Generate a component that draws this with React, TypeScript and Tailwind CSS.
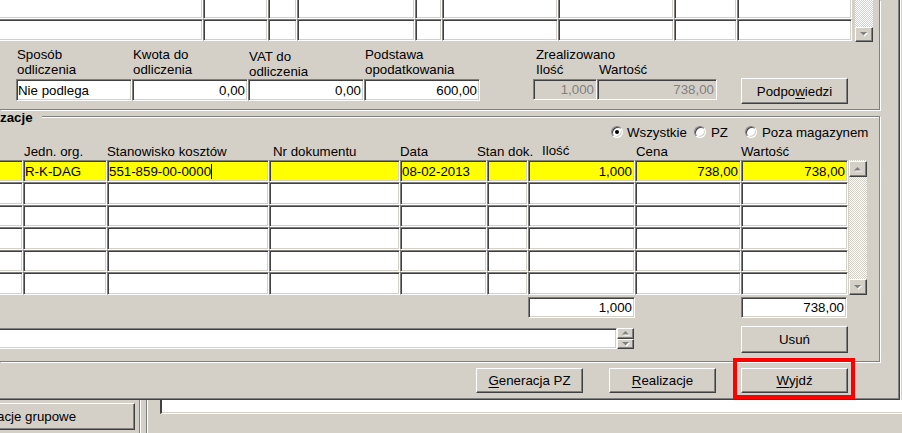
import React from 'react';

const SUNKEN =
  'border border-t-[#808080] border-l-[#808080] border-b-white border-r-white shadow-[inset_1px_1px_0_#404040,inset_-1px_-1px_0_#d4d0c8]';
const SUNKEN_OPEN =
  'border border-l-0 border-t-[#808080] border-b-white border-r-white shadow-[inset_0_1px_0_#404040,inset_-1px_-1px_0_#d4d0c8]';
const RAISED =
  'border border-t-white border-l-white border-b-[#404040] border-r-[#404040] shadow-[inset_-1px_-1px_0_#808080]';
const RAISED_OPEN =
  'border border-l-0 border-t-white border-b-[#404040] border-r-[#404040] shadow-[inset_-1px_-1px_0_#808080]';
const TRACK =
  'bg-[repeating-conic-gradient(#d4d0c8_0%_25%,#ffffff_0%_50%)] bg-[length:2px_2px]';

const topCols = [
  'w-[203px]',
  'w-[65px]',
  'w-[29px]',
  'w-[118px]',
  'w-[27px]',
  'w-[116px]',
  'w-[116px]',
  'w-[63px]',
  'w-[115px]'
];

const lowCols = [
  'w-[23px]',
  'w-[84px]',
  'w-[162px]',
  'w-[131px]',
  'w-[87px]',
  'w-[41px]',
  'w-[107px]',
  'w-[106px]',
  'w-[107px]'
];

const rowHeights = ['h-[22px]', 'h-[23px]', 'h-[22px]', 'h-[23px]', 'h-[22px]', 'h-[23px]'];

// first row of the realizations grid (yellow, being edited)
const firstRow: { text: string; right?: boolean; caret?: boolean }[] = [
  { text: '' },
  { text: 'R-K-DAG' },
  { text: '551-859-00-0000', caret: true },
  { text: '' },
  { text: '08-02-2013' },
  { text: '' },
  { text: '1,000', right: true },
  { text: '738,00', right: true },
  { text: '738,00', right: true }
];

const Arrow = ({ down }: { down?: boolean }) => (
  <svg width="8" height="5" viewBox="0 0 8 5">
    {down ? (
      <>
        <path d="M1 1h7L4.5 4.5z" fill="#ffffff" />
        <path d="M0 0h7L3.5 3.5z" fill="#808080" />
      </>
    ) : (
      <>
        <path d="M4.5 1L8 4.5H1z" fill="#ffffff" />
        <path d="M3.5 0L7 3.5H0z" fill="#808080" />
      </>
    )}
  </svg>
);

const ScrollBtn = ({ down, className }: { down?: boolean; className: string }) => (
  <div className={`${RAISED} ${className} w-full bg-[#d4d0c8] flex items-center justify-center`}>
    <Arrow down={down} />
  </div>
);

const Radio = ({ on }: { on?: boolean }) => (
  <span className="w-[12px] h-[12px] shrink-0 rounded-full bg-white border border-t-[#808080] border-l-[#808080] border-b-white border-r-white shadow-[inset_1px_1px_0_#404040,inset_-1px_-1px_0_#d4d0c8] flex items-center justify-center">
    {on && <span className="w-[4px] h-[4px] rounded-full bg-black" />}
  </span>
);

const Button = ({ className, children }: { className: string; children: React.ReactNode }) => (
  <div className={`${RAISED} ${className} bg-[#d4d0c8] flex items-center justify-center`}>{children}</div>
);

interface FieldProps {
  line1: string;
  line2: string;
  value: string;
  right?: boolean;
  lower?: boolean;
}

const Field: React.FC<FieldProps> = ({ line1, line2, value, right, lower }) => (
  <div className="w-[116px] flex flex-col">
    <div className={`h-[32px] pl-[1px] whitespace-nowrap ${lower ? 'pt-[2px]' : ''}`}>
      <div>{line1}</div>
      <div>{line2}</div>
    </div>
    <div
      className={`h-[22px] bg-white ${SUNKEN} flex items-center ${right ? 'justify-end pr-[2px]' : 'pl-[1px]'}`}
    >
      {value}
    </div>
  </div>
);

const UpperGroup = () => (
  <div className="w-[880px] h-[110px] shrink-0 border-r border-b border-[#808080] shadow-[1px_1px_0_#ffffff] flex flex-col">
    <div className="flex items-start -mt-[3px]">
      <div className="flex flex-col">
        {[0, 1].map((r) => (
          <div key={r} className="flex h-[22px]">
            {topCols.map((w, i) => (
              <div key={i} className={`${w} h-full bg-white ${i === 0 ? SUNKEN_OPEN : SUNKEN}`} />
            ))}
          </div>
        ))}
      </div>
      <div className={`ml-[3px] w-[18px] h-[45px] flex flex-col justify-end ${TRACK}`}>
        <ScrollBtn down className="h-[15px]" />
      </div>
    </div>

    <div className="flex items-start mt-[5px] ml-[16px]">
      <Field line1="Sposób" line2="odliczenia" value="Nie podlega" />
      <Field line1="Kwota do" line2="odliczenia" value="0,00" right />
      <Field line1="VAT do" line2="odliczenia" value="0,00" right lower />
      <Field line1="Podstawa" line2="opodatkowania" value="600,00" right />

      <div className="ml-[53px] flex flex-col">
        <div className="pl-[3px]">Zrealizowano</div>
        <div className="flex h-[17px]">
          <div className="w-[64px] pl-[3px]">Ilość</div>
          <div className="pl-[2px]">Wartość</div>
        </div>
        <div className="flex">
          <div className={`w-[64px] h-[21px] ${SUNKEN} flex items-center justify-end pr-[2px] text-[#808080]`}>
            1,000
          </div>
          <div className={`w-[120px] h-[21px] ${SUNKEN} flex items-center justify-end pr-[2px] text-[#808080]`}>
            738,00
          </div>
        </div>
      </div>

      <Button className="ml-[24px] mt-[31px] w-[107px] h-[26px]">
        <span>
          Podpo<span className="underline underline-offset-[2px]">w</span>iedzi
        </span>
      </Button>
    </div>
  </div>
);

const LowerGroup = () => (
  <div className="mt-[6px] w-[880px] h-[246px] shrink-0 border-t border-r border-b border-[#808080] shadow-[inset_0_1px_0_#ffffff,1px_1px_0_#ffffff] flex flex-col">
    <div className="-mt-[6px] h-[13px] leading-[13px] w-fit pr-[9px] bg-[#d4d0c8] font-bold">zacje</div>

    {/* filter radios */}
    <div className="h-[16px] flex items-center ml-[611px]">
      <div className="w-[83px] flex items-center gap-[4px]">
        <Radio on />
        <span>Wszystkie</span>
      </div>
      <div className="w-[51px] flex items-center gap-[5px]">
        <Radio />
        <span>PZ</span>
      </div>
      <div className="flex items-center gap-[5px]">
        <Radio />
        <span className="whitespace-nowrap">Poza magazynem</span>
      </div>
    </div>

    {/* column headers */}
    <div className="h-[20px] pt-[4px] flex ml-[24px] whitespace-nowrap">
      <div className="w-[83px]">Jedn. org.</div>
      <div className="w-[166px]">Stanowisko kosztów</div>
      <div className="w-[127px]">Nr dokumentu</div>
      <div className="w-[77px]">Data</div>
      <div className="w-[65px]">Stan dok.</div>
      <div className="w-[94px] -mt-[1px]">Ilość</div>
      <div className="w-[105px]">Cena</div>
      <div>Wartość</div>
    </div>

    {/* grid */}
    <div className="flex items-start">
      <div className="flex flex-col">
        {rowHeights.map((h, r) => (
          <div key={r} className={`flex ${h}`}>
            {lowCols.map((w, i) => {
              const cell = firstRow[i];
              const yellow = r === 0;
              return (
                <div
                  key={i}
                  className={`${w} h-full ${yellow ? 'bg-[#ffff00]' : 'bg-white'} ${
                    i === 0 ? SUNKEN_OPEN : SUNKEN
                  } flex items-center whitespace-nowrap overflow-hidden ${
                    cell.right ? 'justify-end pr-[2px]' : 'pl-[1px]'
                  }`}
                >
                  {yellow && cell.text}
                  {yellow && cell.caret && <span className="w-[1px] h-[15px] bg-black" />}
                </div>
              );
            })}
          </div>
        ))}
      </div>
      <div className={`ml-[1px] w-[18px] h-[135px] flex flex-col justify-between ${TRACK}`}>
        <ScrollBtn className="h-[16px] mt-[1px]" />
        <ScrollBtn down className="h-[16px]" />
      </div>
    </div>

    {/* totals */}
    <div className="flex mt-[2px] ml-[528px]">
      <div className={`w-[107px] h-[21px] bg-white ${SUNKEN} flex items-center justify-end pr-[2px]`}>1,000</div>
      <div className={`ml-[106px] w-[106px] h-[21px] bg-white ${SUNKEN} flex items-center justify-end pr-[2px]`}>
        738,00
      </div>
    </div>

    {/* note field + delete */}
    <div className="flex items-start mt-[8px]">
      <div className={`mt-[2px] w-[617px] h-[21px] bg-white ${SUNKEN_OPEN}`} />
      <div className="mt-[2px] w-[17px] h-[21px] flex flex-col">
        <ScrollBtn className="h-[11px]" />
        <ScrollBtn down className="h-[10px]" />
      </div>
      <Button className="ml-[107px] w-[107px] h-[27px]">Usuń</Button>
    </div>
  </div>
);

const Window = () => (
  <div className="w-[900px] h-[400px] shrink-0 border-r border-b border-[#404040] shadow-[inset_-1px_-1px_0_#808080] flex flex-col">
    <UpperGroup />
    <LowerGroup />
    <div className="flex mt-[6px] ml-[476px]">
      <Button className="w-[107px] h-[25px]">
        <span>
          <span className="underline underline-offset-[2px]">G</span>eneracja PZ
        </span>
      </Button>
      <Button className="ml-[26px] w-[107px] h-[25px]">
        <span>
          <span className="underline underline-offset-[2px]">R</span>ealizacje
        </span>
      </Button>
      <div className="relative ml-[25px]">
        <Button className="w-[107px] h-[25px]">
          <span>
            <span className="underline underline-offset-[2px]">W</span>yjdź
          </span>
        </Button>
        {/* red highlight annotation */}
        <div className="absolute -left-[8px] -top-[10px] w-[122px] h-[41px] border-4 border-[#ff0000] pointer-events-none" />
      </div>
    </div>
  </div>
);

const BottomBar = () => (
  <div className="flex h-[33px]">
    <div className={`mt-[3px] w-[135px] h-[27px] ${RAISED_OPEN} flex items-center overflow-hidden`}>
      <span className="-ml-[3px] whitespace-nowrap">acje grupowe</span>
    </div>
    <div className="ml-[4px] w-[2px] h-full border-l border-r border-l-[#808080] border-r-white" />
    <div className="ml-[5px] w-[2px] h-full border-l border-r border-l-[#808080] border-r-white" />
    <div className="ml-[12px] flex-1 h-[14px] bg-white border-l-2 border-b border-l-[#404040] border-b-white shadow-[inset_0_-1px_0_#d4d0c8]" />
  </div>
);

export default function App() {
  return (
    <div className="w-[902px] h-[433px] overflow-hidden bg-[#d4d0c8] font-['Liberation_Sans',Arial,sans-serif] text-[13.3px] leading-[15px] text-black select-none">
      <div className="flex">
        <Window />
        <div className="w-[2px] h-[400px] border-l border-white" />
      </div>
      <BottomBar />
    </div>
  );
}
